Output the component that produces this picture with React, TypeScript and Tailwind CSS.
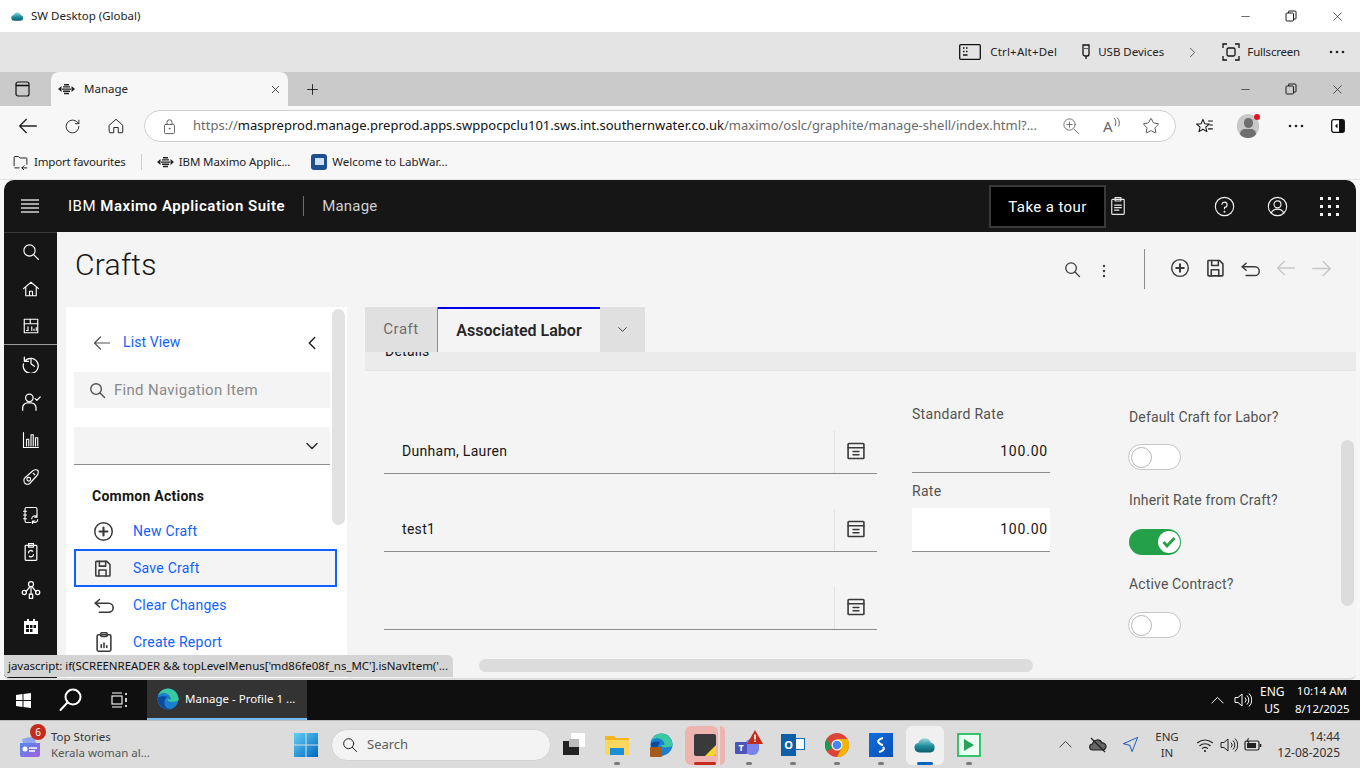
import { ReactNode } from "react";
import { ChevronDown, ChevronLeft, ChevronRight, RotateCw, Star, X, Minus, Plus } from "lucide-react";

const ui = "font-['Noto_Sans','Open_Sans',sans-serif]";
const plex = "font-['Roboto','Noto_Sans',sans-serif]";

// 24x24 stroked icon wrapper, most of the carbon-ish glyphs below use it
function Ic({ s = 20, w = 1.5, c = "currentColor", children, className = "" }: { s?: number; w?: number; c?: string; children: ReactNode; className?: string }) {
  return (
    <svg width={s} height={s} viewBox="0 0 24 24" fill="none" stroke={c} strokeWidth={w} strokeLinecap="round" strokeLinejoin="round" className={"shrink-0 " + className}>
      {children}
    </svg>
  );
}

const Hamburger = () => (
  <svg width="20" height="16" viewBox="0 0 20 16" stroke="#d4d4d4" strokeWidth="1.4" className="shrink-0">
    <path d="M1 2h18M1 6h18M1 10h18M1 14h18" />
  </svg>
);
const SearchI = ({ s = 20, w = 1.5 }: { s?: number; w?: number }) => <Ic s={s} w={w}><circle cx="10" cy="10" r="7.5" /><path d="m15.5 15.5 6.5 6.5" /></Ic>;
const AddCircle = ({ s = 24 }: { s?: number }) => <Ic s={s} w={1.7}><circle cx="12" cy="12" r="10" /><path d="M12 7.5v9M7.5 12h9" strokeWidth="2.4" /></Ic>;
const SaveI = ({ s = 24 }: { s?: number }) => <Ic s={s} w={1.9}><path d="M4.5 3h13l4 4v13.5a1 1 0 0 1-1 1h-16a1 1 0 0 1-1-1v-17a1 1 0 0 1 1-.5Z" /><path d="M8 3v6h8V3M7.5 21.5V14h9v7.5" /></Ic>;
const UndoI = ({ s = 24 }: { s?: number }) => <Ic s={s} w={1.7}><path d="M7 6 2.5 10 7 14" /><path d="M2.5 10H17a5 5 0 0 1 0 10H7" /></Ic>;
const Arrow = ({ dir, c, s = 24 }: { dir: "l" | "r"; c: string; s?: number }) => (
  <Ic s={s} c={c} w={1.6}>
    {dir === "l" ? <path d="M22 12H2M10 4l-8 8 8 8" /> : <path d="M2 12h20M14 4l8 8-8 8" />}
  </Ic>
);
const LookupI = () => (
  <Ic s={20} w={1.9} c="#393939">
    <rect x="2.5" y="3" width="19" height="18" rx="1" />
    <path d="M2.5 8h19M8.5 12.5h7M8.5 16.5h7" />
  </Ic>
);
const ReportI = () => (
  <Ic s={22} w={1.7} c="#393939">
    <rect x="4.5" y="4" width="15" height="18" rx="1.5" />
    <rect x="8.5" y="2" width="7" height="4" rx="1" />
    <path d="M9 18v-3M12 18v-5M15 18v-2" />
  </Ic>
);
const Bee = () => (
  <svg width="17" height="12" viewBox="0 0 17 12" fill="#222" className="shrink-0">
    <path d="M6 1h5v1.4H6zM5 3.2h7v1.4H5zM4 5.4h9v1.4H4zM5 7.6h7V9H5zM6 9.8h5v1.4H6z" />
    <path d="M0 6l3.5-3v6zM17 6l-3.5-3v6z" />
  </svg>
);
const DotsH = ({ c = "#222" }: { c?: string }) => (
  <svg width="16" height="4" viewBox="0 0 16 4" fill={c}><circle cx="2" cy="2" r="1.3" /><circle cx="8" cy="2" r="1.3" /><circle cx="14" cy="2" r="1.3" /></svg>
);
const RestoreI = () => (
  <svg width="12" height="12" viewBox="0 0 12 12" fill="none" stroke="#1a1a1a" strokeWidth="1" className="shrink-0">
    <rect x="1" y="3" width="7.5" height="8" rx="1" /><path d="M3.5 3V1.5a.5.5 0 0 1 .5-.5h6a1 1 0 0 1 1 1v6.500a.5.5 0 0 1-.5.5H8.500" />
  </svg>
);
const WinCtl = () => (
  <div className="flex items-center text-[#1a1a1a]">
    <div className="w-[46px] flex justify-center"><Minus size={13} strokeWidth={1.2} /></div>
    <div className="w-[46px] flex justify-center"><RestoreI /></div>
    <div className="w-[46px] flex justify-center"><X size={15} strokeWidth={1.1} /></div>
  </div>
);

const CloudApp = ({ s = 16 }: { s?: number }) => (
  <svg width={s} height={s * 0.8} viewBox="0 0 20 16" className="shrink-0">
    <defs><linearGradient id="cl" x1="0" y1="0" x2="0" y2="1"><stop offset="0" stopColor="#9adbe0" /><stop offset="0.55" stopColor="#1f8c9c" /><stop offset="1" stopColor="#0d5d6e" /></linearGradient></defs>
    <path d="M5 15a4.500 4.500 0 0 1-1-8.900A6 6 0 0 1 15.300 6 4.600 4.600 0 0 1 15 15Z" fill="url(#cl)" />
  </svg>
);

const EdgeLogo = ({ s = 24 }: { s?: number }) => (
  <svg width={s} height={s} viewBox="0 0 24 24" className="shrink-0">
    <circle cx="12" cy="12" r="11.500" fill="#1b7fd0" />
    <path d="M23.500 13c0-7-5-12.500-11.500-12.500C7 .5 2.500 4 1 8.500 3.500 5.500 7 5 10 6c3.500 1.200 5.500 4 5 6.500h-4c0 1.500 2.500 2.500 5.500 2.500 3.300 0 7-1 7-2Z" fill="#38c9a0" />
    <path d="M1 11c-.6 6 4 12 11 12.500 1.500 0 3-.3 4.300-.8-4.300 1-8-2-8.300-6C7.700 13 10 10.500 11 9.500 7 8.500 2 9 1 11Z" fill="#0c4a9a" />
  </svg>
);

const Speaker = ({ c }: { c: string }) => (
  <svg width="18" height="16" viewBox="0 0 18 16" fill="none" stroke={c} strokeWidth="1" className="shrink-0"><path d="M1 5.500h3L8 2v12l-4-3.500H1ZM11 5.500a3.500 3.500 0 0 1 0 5M13 3.500a6.500 6.500 0 0 1 0 9M15 1.500a9 9 0 0 1 0 13" /></svg>
);

// sidebar glyphs
const sideTop: ReactNode[] = [
  <SearchI key="s" s={18} />,
  <Ic key="h" s={18}><path d="M2 11.500 12 3l10 8.500M5 9v12h14V9M10 21v-6h4v6" /></Ic>,
  <Ic key="d" s={18}><rect x="3" y="3" width="18" height="18" /><path d="M3 9h18M11 3v6M8 13v5h-2M13 18v-5M16 18v-2M19 18v-4" /></Ic>,
];
const sideBottom: ReactNode[] = [
  <Ic key="a" s={20} className="-mt-[3px]"><path d="M4 5v5h5" /><path d="M4.500 10A9 9 0 1 1 3 13" /><path d="M12 7v6l4 3" /></Ic>,
  <Ic key="b" s={20}><circle cx="10" cy="7" r="4.500" /><path d="M2 22v-3a6 6 0 0 1 6-6h4a6 6 0 0 1 6 6v3M17 8l2 2 4-4" /></Ic>,
  <Ic key="c" s={18}><path d="M2 2v20h20M6 20v-9h3v9M12 20V5h3v15M18 20V9h3v11" /></Ic>,
  <Ic key="e" s={18}><path d="M3 14 14 4c2-2 6-2 7-1s1 5-1 7L10 21c-3 1.500-6 .5-7-2-.6-1.700-.6-3.500 0-5Z" /><circle cx="9" cy="15" r="2.500" /><path d="m15 7 2 2" /></Ic>,
  <Ic key="f" s={18}><path d="M12 22H6a2 2 0 0 1-2-2V4a2 2 0 0 1 2-2h12a2 2 0 0 1 2 2v7M2 7h4M2 12h4M2 17h4" /><path d="M13 17a4 4 0 0 1 7-2.500M21 18a4 4 0 0 1-7 2.500M20 11.500V15h-3M14 23.500V20h3" /></Ic>,
  <Ic key="g" s={20}><rect x="5" y="4" width="14" height="18" rx="1" /><rect x="9" y="2" width="6" height="4" /><path d="M9 13a3 3 0 0 1 5-2M15 15a3 3 0 0 1-5 2" /></Ic>,
  <Ic key="i" s={20}><circle cx="12" cy="5" r="3" /><circle cx="4" cy="15" r="2.500" /><circle cx="20" cy="15" r="2.500" /><rect x="10" y="17" width="4" height="5" /><path d="M12 8v9M6 14l4-5M18 14l-4-5" /></Ic>,
  <svg key="j" width="18" height="18" viewBox="0 0 18 18" fill="#fff"><path d="M2 3h3V1h2v2h4V1h2v2h3v13H2Z" /><path d="M4 7h3v3H4zM8 7h2.500v3H8zM11.500 7H14v3h-2.500zM4 11h3v3H4zM8 11h2.500v3H8z" fill="#161616" /></svg>,
];

function TopBars() {
  return (
    <div className={ui}>
      {/* remote desktop title */}
      <div className="h-8 bg-white flex items-center pl-[11px] justify-between">
        <div className="flex items-center gap-[7px] text-[11.500px] text-[#222]"><CloudApp s={13} /><span>SW Desktop (Global)</span></div>
        <WinCtl />
      </div>
      <div className="h-10 bg-[#e4e4e4] flex items-center justify-end text-[11.500px] text-[#222]">
        <svg width="22" height="16" viewBox="0 0 22 16" fill="none" stroke="#111" strokeWidth="1.300" className="mr-[9px]"><rect x=".7" y=".7" width="20.600" height="14.600" rx="1" /><path d="M4 4h1.500M7 4h1.500M4 7.500h1.500M7 7.500h1.500M4 11h4.500" strokeWidth="1.500" /></svg>
        <span className="tracking-[0.2px]">Ctrl+Alt+Del</span>
        <svg width="10" height="16" viewBox="0 0 10 16" fill="none" stroke="#111" strokeWidth="1.300" className="ml-6 mr-[7px]"><path d="M2 1h6v9a2 2 0 0 1-2 2H4a2 2 0 0 1-2-2ZM5 12v3M4 4v1M6 4v1" /></svg>
        <span>USB Devices</span>
        <ChevronRight size={17} strokeWidth={1} className="ml-5 mr-[21px]" />
        <svg width="18" height="18" viewBox="0 0 18 18" fill="none" stroke="#111" strokeWidth="1.300" className="mr-[7px]"><path d="M1 5V1h4M13 1h4v4M17 13v4h-4M5 17H1v-4" /><rect x="5" y="5" width="8" height="8" rx="1.500" /></svg>
        <span className="tracking-[-0.2px]">Fullscreen</span>
        <div className="ml-[29px] mr-[15px]"><DotsH /></div>
      </div>
      {/* edge tabs */}
      <div className="h-[34px] bg-[#cacaca] flex items-center pl-[14px]">
        <svg width="18" height="18" viewBox="0 0 18 18" fill="none" stroke="#111" strokeWidth="1.200" className="shrink-0"><rect x="2" y="2" width="13" height="14" rx="2" /><path d="M2 5.500h13" strokeWidth="1.600" /></svg>
        <div className="ml-[19px] w-[237px] h-[34px] bg-[#f7f7f7] rounded-t-lg flex items-center pl-[7px] pr-[6px] text-[11.500px] text-[#222]">
          <Bee /><span className="ml-[9px]">Manage</span>
          <X size={13} strokeWidth={1.500} className="ml-auto" />
        </div>
        <Plus size={17} strokeWidth={1.200} className="ml-[16px] text-[#111]" />
        <div className="ml-auto"><WinCtl /></div>
      </div>
      {/* address bar */}
      <div className="h-10 bg-[#f7f7f7] flex items-center text-[#222]">
        <div className="w-14 flex justify-center"><Arrow dir="l" c="#222" s={20} /></div>
        <div className="w-[32px] flex justify-center"><RotateCw size={17} strokeWidth={1.300} /></div>
        <div className="w-[56px] flex justify-center"><Ic s={18} w={1.300}><path d="M3 11 12 3l9 8v9a1 1 0 0 1-1 1h-5v-7H9v7H4a1 1 0 0 1-1-1Z" /></Ic></div>
        <div className="w-[1032px] h-8 bg-white rounded-full border border-[#cfcfcf] flex items-center pl-4 pr-3">
          <Ic s={17} w={1.300} c="#555"><rect x="5" y="9" width="14" height="13" rx="1.500" /><path d="M8.500 9V6a3.500 3.500 0 0 1 7 0v3" /><circle cx="12" cy="15" r=".6" /></Ic>
          <span className="ml-[15px] w-[850px] shrink-0 text-[13px] whitespace-nowrap text-[#6a6a6a]">
            https://<span className="text-[#111]">maspreprod.manage.preprod.apps.swppocpclu101.sws.int.southernwater.co.uk</span>/maximo/oslc/graphite/manage-shell/index.html?...
          </span>
          <Ic s={18} w={1.200} c="#666" className="ml-[19px]"><circle cx="10" cy="10" r="7.500" /><path d="m16 16 6 6M10 6.500v7M6.500 10h7" /></Ic>
          <span className="ml-[23px] text-[15px] text-[#666] leading-none">A</span>
          <svg width="7" height="11" viewBox="0 0 7 11" fill="none" stroke="#666" strokeWidth="1" className="-mt-[7px] shrink-0"><path d="M1 1c2 2 2.500 5 1 8M4 .5c2.500 3 3 6 1.500 9" /></svg>
          <Star size={18} strokeWidth={1.200} className="ml-[22px] text-[#444] shrink-0" />
        </div>
        <Ic s={19} w={1.300} c="#111" className="ml-[19px]"><path d="m10 3 2.300 5.500 5.700.5-4.400 3.800 1.400 5.700L10 15.500 5 18.500l1.400-5.700L2 9l5.700-.5ZM17 5h5M19 10h3M17 15h5" /></Ic>
        <div className="ml-[23px] relative w-[22px] h-[24px] rounded-full bg-[#c8c8c8] overflow-hidden shrink-0">
          <div className="mx-auto mt-[4px] w-[9px] h-[10px] rounded-full bg-[#6e6e6e]" />
          <div className="mx-auto mt-[1px] w-[16px] h-[10px] rounded-full bg-[#6e6e6e]" />
        </div>
        <div className="w-[6px] h-[6px] rounded-full bg-[#e81123] -ml-[5px] -mt-[18px] z-10 shrink-0" />
        <div className="ml-[28px]"><DotsH /></div>
        <svg width="14" height="14" viewBox="0 0 14 14" className="ml-[27px] shrink-0"><rect x=".7" y=".7" width="12.600" height="12.600" rx="2" fill="#fff" stroke="#111" strokeWidth="1.300" /><rect x="8" y="1" width="5" height="12" fill="#111" /><path d="M6.500 4.500 4 7l2.500 2.500V4.500Z" fill="#111" /></svg>
      </div>
      {/* favourites */}
      <div className="h-[34px] bg-[#f7f7f7] border-b border-[#e4e4e4] flex items-center pl-[12px] pb-[2px] text-[11.500px] text-[#222]">
        <Ic s={17} w={1.300} c="#111"><path d="M3 18V6a1 1 0 0 1 1-1h5l2 2h9a1 1 0 0 1 1 1v8M4 21h6M14 21h7M17 18l-3 3 3 3" /></Ic>
        <span className="ml-[5px] tracking-[-0.18px]">Import favourites</span>
        <div className="w-px h-4 bg-[#cfcfcf] mx-[15px]" />
        <Bee /><span className="ml-[5px] tracking-[-0.1px]">IBM Maximo Applic...</span>
        <div className="ml-[21px] w-[16px] h-[16px] rounded-[3px] bg-[#1d4f8c] flex items-center justify-center"><div className="w-[9px] h-[7px] bg-[#cfe0f5]" /></div>
        <span className="ml-[5px]">Welcome to LabWar...</span>
      </div>
    </div>
  );
}

function Field({ value }: { value?: string }) {
  return (
    <div className="h-[43px] flex border-b border-[#8d8d8d]">
      <div className="flex-1 pl-[18px] pb-[1px] flex items-center text-[14px] tracking-[0.3px] text-[#161616]">{value}</div>
      <div className="w-[43px] border-l border-[#e0e0e0] flex items-center justify-center pb-[2px]"><LookupI /></div>
    </div>
  );
}

function Toggle({ on }: { on?: boolean }) {
  if (on)
    return (
      <div className="w-[52px] h-[26px] rounded-full bg-[#24a148] flex items-center justify-end pr-[1px]">
        <div className="w-[22px] h-[22px] rounded-full bg-white flex items-center justify-center">
          <svg width="14" height="12" viewBox="0 0 14 12" fill="none" stroke="#24a148" strokeWidth="2.800"><path d="m1.500 6 3.500 4 7.500-8" /></svg>
        </div>
      </div>
    );
  return (
    <div className="w-[53px] h-[26px] rounded-full bg-white border border-[#c6c6c6] flex items-center pl-[2px]">
      <div className="w-[21px] h-[21px] rounded-full bg-white border border-[#b5b5b5]" />
    </div>
  );
}

function NavRow({ icon, label, active }: { icon: ReactNode; label: string; active?: boolean }) {
  return (
    <div className={"h-[38px] -mb-[1px] flex items-center " + (active ? "w-[263px] border-2 border-[#0f62fe] bg-[#f4f4f4]" : "w-[256px] border-2 border-transparent")}>
      <div className="w-[57px] pl-[17px] flex items-center text-[#393939]">{icon}</div>
      <span className="text-[14px] tracking-[0.25px] text-[#0f62fe]">{label}</span>
    </div>
  );
}

function LeftPanel() {
  return (
    <div className="relative ml-[9px] w-[281px] bg-white overflow-hidden">
      <div className="absolute right-[2px] top-[2px] w-[13px] h-[216px] rounded-full bg-[#e2e2e2]" />
      <div className="pl-[8px]">
        <div className="h-[65px] flex items-center pl-[19px] w-[248px] pt-[6px]">
          <Arrow dir="l" c="#525252" s={18} />
          <span className="ml-[12px] text-[14px] tracking-[0.1px] text-[#0f62fe]">List View</span>
          <ChevronLeft size={22} strokeWidth={1.600} className="ml-auto -mr-[1px] text-[#222]" />
        </div>
        <div className="w-[256px] h-[36px] bg-[#f4f4f4] flex items-center pl-[15px] text-[#8a8a8a] text-[15px] tracking-[0.3px]">
          <div className="text-[#525252]"><SearchI s={17} w={2} /></div>
          <span className="ml-[8px]">Find Navigation Item</span>
        </div>
        <div className="mt-[19px] w-[256px] h-[38px] bg-[#f4f4f4] border-b border-[#8d8d8d] flex items-center justify-end pr-[8px]">
          <ChevronDown size={20} strokeWidth={1.600} className="text-[#222]" />
        </div>
        <div className="mt-[21px] pl-[18px] text-[14px] font-bold tracking-[0.25px] text-[#161616]">Common Actions</div>
        <div className="mt-[5px]">
          <NavRow icon={<AddCircle s={21} />} label="New Craft" />
          <NavRow active icon={<SaveI s={19} />} label="Save Craft" />
          <NavRow icon={<UndoI s={22} />} label="Clear Changes" />
          <NavRow icon={<ReportI />} label="Create Report" />
        </div>
      </div>
    </div>
  );
}

function RightPanel() {
  const labelCls = "text-[14px] tracking-[0.3px] text-[#525252] leading-5";
  const toggleLabelCls = "text-[14px] tracking-[0.15px] text-[#525252] leading-5 ml-[1px]";
  return (
    <div className="relative ml-[18px] flex-1 min-w-0 overflow-hidden">
      <div className="flex h-[45px] text-[16px] bg-[#f4f4f4]">
        <div className="w-[73px] bg-[#e0e0e0] border-r border-[#8d8d8d] flex items-center justify-center text-[#6f6f6f] tracking-[0.5px] text-[15px]">Craft</div>
        <div className="w-[162px] border-t-2 border-[#0000e6] flex items-center justify-center font-semibold text-[#262626]">Associated Labor</div>
        <div className="w-[45px] bg-[#e0e0e0] flex items-center justify-center"><ChevronDown size={15} strokeWidth={1.300} className="text-[#222]" /></div>
      </div>
      <div className="h-[19px] bg-[#ebebeb] border-b border-[#e2e6ea] overflow-hidden pl-[20px]">
        <div className="-mt-[11px] text-[14px] leading-5 tracking-[0.25px] text-[#161616]">Details</div>
      </div>
      <div className="flex pl-[19px]">
        <div className="w-[493px] pt-[60px] flex flex-col gap-[35px]">
          <Field value="Dunham, Lauren" />
          <Field value="test1" />
          <Field />
        </div>
        <div className="ml-[35px] w-[138px] pt-[33px]">
          <div className={labelCls}>Standard Rate</div>
          <div className="h-[43px] mt-[7px] -translate-y-[1px] border-b border-[#8d8d8d] flex items-center justify-end pr-[2px] text-[14px] tracking-[0.8px] text-[#161616]">100.00</div>
          <div className={labelCls + " mt-[7px]"}>Rate</div>
          <div className="h-[44px] mt-[7px] bg-white border-b border-[#8d8d8d] flex items-center justify-end pr-[2px] text-[14px] tracking-[0.8px] text-[#161616]">100.00</div>
        </div>
        <div className="ml-[78px] pt-[36px]">
          <div className={toggleLabelCls}>Default Craft for Labor?</div>
          <div className="mt-[17px]"><Toggle /></div>
          <div className={toggleLabelCls + " mt-[20px]"}>Inherit Rate from Craft?</div>
          <div className="mt-[19px] ml-[1px]"><Toggle on /></div>
          <div className={toggleLabelCls + " mt-[19px]"}>Active Contract?</div>
          <div className="mt-[18px]"><Toggle /></div>
        </div>
      </div>
      <div className="absolute right-[2px] top-[133px] w-[13px] h-[166px] rounded-full bg-[#dcdcdc]" />
      <div className="absolute left-[114px] top-[352px] w-[554px] h-[13px] rounded-full bg-[#dcdcdc]" />
    </div>
  );
}

function AppWindow() {
  return (
    <div className={"relative mx-1 h-[500px] rounded-t-[10px] rounded-b-md overflow-hidden flex flex-col bg-[#f4f4f4] border-b-2 border-[#dcdcdc] " + plex}>
      <header className="h-[52px] bg-[#161616] flex items-center text-white shrink-0">
        <div className="ml-4"><Hamburger /></div>
        <span className="ml-[28px] text-[15px] tracking-[0.52px]">IBM <b className="font-semibold">Maximo Application Suite</b></span>
        <div className="ml-[18px] w-px h-[20px] bg-[#6f6f6f]" />
        <span className="ml-[18px] text-[15px] tracking-[0.2px] text-[#d0d0d0]">Manage</span>
        <div className="ml-auto w-[117px] h-[43px] bg-black border-2 border-[#393939] flex items-center justify-center text-[15px] tracking-[0.4px] pt-[2px]">Take a tour</div>
        <div className="w-[24px] flex justify-center"><Ic s={20} w={1.400} c="#e8e8e8"><rect x="4.500" y="4" width="15" height="18" rx="1" /><rect x="8.500" y="2" width="7" height="4" /><path d="M8 11h8M8 14h8M8 17h5" /></Ic></div>
        <div className="ml-[84px]"><Ic s={21} w={1.300} c="#f0f0f0"><circle cx="12" cy="12" r="10.500" /><path d="M9 9.500A3 3 0 1 1 12 13v1.500" /><circle cx="12" cy="18" r=".5" /></Ic></div>
        <div className="ml-[32px]"><Ic s={21} w={1.300} c="#f0f0f0"><circle cx="12" cy="12" r="10.500" /><circle cx="12" cy="9.500" r="4" /><path d="M5 19c1.500-3 3.500-4 7-4s5.500 1 7 4" /></Ic></div>
        <div className="ml-[32px] mr-[17px] grid grid-cols-3 gap-[5px]">
          {Array.from({ length: 9 }).map((_, i) => <div key={i} className="w-[3px] h-[3px] bg-[#f0f0f0]" />)}
        </div>
      </header>
      <div className="flex flex-1 min-h-0">
        <aside className="w-[53px] bg-[#161616] text-white shrink-0 border-t border-[#3a3a3a]">
          <div className="h-[112px] border-b border-[#9a9a9a]">
            {sideTop.map((ic, i) => <div key={i} className="h-[37px] flex items-center justify-center">{ic}</div>)}
          </div>
          <div className="pt-[1px]">
            {sideBottom.map((ic, i) => <div key={i} className="h-[37.500px] flex items-center justify-center">{ic}</div>)}
          </div>
        </aside>
        <main className="flex-1 min-w-0 flex flex-col">
          <div className="h-[75px] shrink-0 flex items-start">
            <h1 className="ml-[18px] mt-[13px] text-[30px] font-light leading-10 tracking-[0.3px] text-[#161616]">Crafts</h1>
            <div className="ml-auto flex items-center mr-[24px] mt-[16px] h-[42px] text-[#393939]">
              <SearchI s={17} w={1.8} />
              <svg width="4" height="14" viewBox="0 0 4 14" fill="#393939" className="ml-[21px] mt-[4px]"><circle cx="2" cy="2" r="1.200" /><circle cx="2" cy="7" r="1.200" /><circle cx="2" cy="12" r="1.200" /></svg>
              <div className="ml-[38px] w-px h-[40px] bg-[#8d8d8d]" />
              <div className="ml-[25px] -mt-[2px] flex items-center gap-[15px]">
                <AddCircle s={20} /><SaveI s={20} />
                <UndoI s={21} /><Arrow dir="l" c="#c6c6c6" s={20} /><Arrow dir="r" c="#c6c6c6" s={21} />
              </div>
            </div>
          </div>
          <div className="flex flex-1 min-h-0">
            <LeftPanel />
            <RightPanel />
          </div>
        </main>
      </div>
      <div className={"absolute left-0 bottom-[1px] w-[449px] h-[22px] bg-[#d4d4d4] rounded-tr-md flex items-center pl-[4px] text-[11.500px] tracking-[-0.04px] text-[#111] whitespace-nowrap overflow-hidden " + ui}>
        javascript: if(SCREENREADER &amp;&amp; topLevelMenus['md86fe08f_ns_MC'].isNavItem('...
      </div>
    </div>
  );
}

function RemoteTaskbar() {
  return (
    <div className={"h-10 bg-[#0f0f0f] flex items-center text-white " + ui}>
      <svg width="15" height="15" viewBox="0 0 15 15" fill="#fff" className="ml-[16px]"><path d="M0 2 6.500 1v6H0zM7.500 .9 15 0v7H7.500zM0 8h6.500v6L0 13zM7.500 8H15v7l-7.500-1z" /></svg>
      <svg width="26" height="26" viewBox="0 0 26 26" fill="none" stroke="#fff" strokeWidth="2" className="ml-[27px]"><circle cx="15" cy="10" r="7.500" /><path d="M9.500 15.500 2.500 23" strokeLinecap="round" /></svg>
      <svg width="17" height="16" viewBox="0 0 17 16" fill="none" stroke="#fff" strokeWidth="1.100" className="ml-[27px]"><path d="M1 1h10M1 15h10" /><rect x="1" y="4" width="10" height="8" /><path d="M15 1v2M15 6v4M15 13v2" strokeWidth="1.600" /></svg>
      <div className="ml-[19px] w-[160px] h-10 bg-[#333] border-b-2 border-[#76b9ed] flex items-center pl-[10px] text-[11.500px]">
        <EdgeLogo s={22} />
        <span className="ml-[6px] whitespace-nowrap">Manage - Profile 1 ...</span>
      </div>
      <div className="ml-auto flex items-center text-[12px]">
        <Ic s={15} w={1.500} c="#fff"><path d="m3 16 9-9 9 9" /></Ic>
        <div className="ml-[9px]"><Speaker c="#fff" /></div>
        <div className="ml-[8px] text-center leading-[17px] w-[24px]">ENG<br />US</div>
        <div className="ml-[11px] mr-[13px] w-[52px] text-[11.500px] text-right leading-[18px] whitespace-nowrap">10:14 AM<br />8/12/2025</div>
      </div>
    </div>
  );
}

function TrayIcon({ children, cur }: { children: ReactNode; cur?: "red" | "blue" | "dot" | "none" }) {
  return (
    <div className="relative w-[44px] h-[44px] flex items-center justify-center">
      {cur === "red" && (
        <>
          <div className="absolute left-[2px] top-[3px] w-[33px] h-[39px] rounded-md bg-[#eeb4b0]" />
          <div className="absolute left-[37px] top-[3px] w-[5px] h-[39px] rounded-r-md bg-[#eeb4b0]" />
          <div className="absolute bottom-[2px] left-[11px] w-[22px] h-[3px] rounded-full bg-[#c42b1c]" />
        </>
      )}
      {cur === "blue" && (
        <>
          <div className="absolute left-[3px] top-[3px] w-[38px] h-[39px] rounded-md bg-[#f0f0f0]" />
          <div className="absolute bottom-[2px] left-[14px] w-[16px] h-[3px] rounded-full bg-[#0067c0]" />
        </>
      )}
      <div className="relative">{children}</div>
      {cur === "dot" && <div className="absolute bottom-[2px] left-[19px] w-[6px] h-[3px] rounded-full bg-[#7a7a7a]" />}
    </div>
  );
}

function LocalTaskbar() {
  return (
    <div className={"h-12 bg-[#dcdcdc] border-t border-[#bdbdbd] flex items-center " + ui}>
      {/* widgets */}
      <div className="relative ml-[19px] w-[22px] h-[24px] mt-[4px] shrink-0">
        <svg width="22" height="24" viewBox="0 0 22 24">
          <defs><linearGradient id="wd" x1="0" y1="0" x2="1" y2="1"><stop offset="0" stopColor="#4f8bf0" /><stop offset="1" stopColor="#a45ee0" /></linearGradient></defs>
          <path d="M3 4 15 1l3 12-12 3Z" fill="#8fa8ee" />
          <path d="M1 8h20v12a2 2 0 0 1-2 2H3a2 2 0 0 1-2-2Z" fill="url(#wd)" />
          <path d="M10 13h8M10 16h6" stroke="#fff" strokeWidth="1.400" />
          <circle cx="6" cy="14" r="2.500" fill="#fff" />
        </svg>
        <div className="absolute -top-[11px] left-[11px] w-[16px] h-[16px] rounded-full bg-[#c42b1c] text-white text-[10px] leading-[16px] text-center">6</div>
      </div>
      <div className="ml-[10px] w-[99px] text-[11.500px] leading-[16px] whitespace-nowrap">
        <div className="text-[#333]">Top Stories</div>
        <div className="text-[#555]">Kerala woman al...</div>
      </div>
      <svg width="24" height="24" viewBox="0 0 24 24" className="ml-[144px] shrink-0">
        <defs><linearGradient id="w" x1="0" y1="0" x2="1" y2="1"><stop offset="0" stopColor="#62d0f5" /><stop offset="1" stopColor="#0067c0" /></linearGradient></defs>
        <path d="M0 0h11.500v11.500H0zM12.500 0H24v11.500H12.500zM0 12.500h11.500V24H0zM12.500 12.500H24V24H12.500z" fill="url(#w)" />
      </svg>
      <div className="ml-[13px] w-[220px] h-[32px] rounded-full bg-[#f3f3f3] border border-[#d4d4d4] flex items-center pl-[10px] text-[13px] text-[#5c5c5c] shrink-0">
        <div className="text-[#222]"><SearchI s={16} /></div>
        <span className="ml-[9px]">Search</span>
      </div>
      <div className="flex items-center">
        <TrayIcon>
          <div className="relative w-[24px] h-[24px]">
            <div className="absolute right-0 top-0 w-[14px] h-[14px] bg-white" />
            <div className="absolute left-[2px] bottom-[2px] w-[16px] h-[14px] bg-[#222]" />
            <div className="absolute left-[8px] top-[6px] w-[10px] h-[8px] bg-[#bdbdbd]" />
          </div>
        </TrayIcon>
        <TrayIcon cur="dot">
          <svg width="24" height="22" viewBox="0 0 24 22"><path d="M0 2h9l2 2h13v17H0Z" fill="#f3b61f" /><path d="M0 6h24v15H0Z" fill="#ffd75e" /><path d="M5 14h14v7H5Z" fill="#1b8fd6" /></svg>
        </TrayIcon>
        <TrayIcon cur="none">
          <div className="relative"><EdgeLogo s={23} /><div className="absolute -bottom-[1px] left-0 w-[12px] h-[10px] bg-[#a65b17] rounded-[1px]" /></div>
        </TrayIcon>
        <TrayIcon cur="red">
          <div className="relative w-[22px] h-[22px] bg-[#3a3a3a] rounded-[2px] overflow-hidden">
            <div className="absolute right-0 bottom-0 w-0 h-0 border-l-[11px] border-l-transparent border-b-[11px] border-b-[#f6d327]" />
          </div>
        </TrayIcon>
        <TrayIcon cur="dot">
          <div className="relative w-[28px] h-[24px]">
            <div className="absolute right-[4px] top-[6px] w-[14px] h-[16px] rounded-md bg-[#7b83eb]" />
            <div className="absolute left-0 top-[9px] w-[12px] h-[12px] bg-[#4b53bc] rounded-[1px] text-white text-[9px] leading-[12px] text-center font-bold">T</div>
            <svg width="16" height="14" viewBox="0 0 16 14" className="absolute right-0 -top-[3px]"><path d="M8 0 16 14H0Z" fill="#c42b1c" /><path d="M7.200 4.500h1.600v5H7.200zM7.200 10.500h1.600V12H7.200z" fill="#fff" /></svg>
          </div>
        </TrayIcon>
        <TrayIcon cur="dot">
          <div className="relative w-[24px] h-[22px]">
            <div className="absolute right-0 top-[4px] w-[14px] h-[12px] bg-white border border-[#0f6cbd]" />
            <div className="absolute left-0 top-0 w-[15px] h-[22px] bg-[#0f5fa8] text-white text-[11px] leading-[22px] text-center font-bold">O</div>
          </div>
        </TrayIcon>
        <TrayIcon cur="dot">
          <svg width="24" height="24" viewBox="0 0 24 24">
            <circle cx="12" cy="12" r="12" fill="#db4437" />
            <path d="M12 12 1.600 18A12 12 0 0 1 1.600 6L7 15Z" fill="#0f9d58" />
            <path d="M12 24A12 12 0 0 0 22.400 6H12l4.500 9Z" fill="#f4b400" />
            <circle cx="12" cy="12" r="5.500" fill="#fff" /><circle cx="12" cy="12" r="4.300" fill="#4285f4" />
          </svg>
        </TrayIcon>
        <TrayIcon cur="dot">
          <div className="w-[24px] h-[24px] bg-gradient-to-br from-[#0f6fe0] to-[#0a4fb5] flex items-center justify-center">
            <svg width="12" height="18" viewBox="0 0 12 18" fill="none" stroke="#fff" strokeWidth="2"><path d="M8 2C4 3 2 5 4 7s4 2 4 2M4 16c4-1 6-3 4-5" /></svg>
          </div>
        </TrayIcon>
        <TrayIcon cur="blue"><CloudApp s={22} /></TrayIcon>
        <TrayIcon cur="dot">
          <div className="w-[24px] h-[24px] border-2 border-[#35c46c] flex items-center justify-center bg-[#eafff1]">
            <div className="w-0 h-0 border-y-[6px] border-y-transparent border-l-[10px] border-l-[#27a35b]" />
          </div>
        </TrayIcon>
      </div>
      <div className="ml-[67px] flex items-center text-[#222]">
        <Ic s={15} w={1.500} c="#333"><path d="m3 16 9-9 9 9" /></Ic>
        <svg width="18" height="16" viewBox="0 0 18 16" className="ml-[16px]" fill="none" stroke="#222" strokeWidth="1.200"><path d="M4 13a3 3 0 0 1-.5-6A5 5 0 0 1 13 6a3.500 3.500 0 0 1 1 7Z" fill="#666" /><path d="m2 1 14 14" /></svg>
        <Ic s={19} w={1.300} c="#2a63b5" className="ml-[14px]"><path d="M21 3 3 11l8 2 3 8Z" /></Ic>
        <div className="ml-[15px] w-[24px] text-center text-[11.500px] leading-[16px] text-[#333]">ENG<br />IN</div>
        <Ic s={18} w={1.400} c="#222" className="ml-[17px]"><path d="M2 9c6-5 14-5 20 0M5 13c4-3.500 10-3.500 14 0M8.500 16.500c2-1.500 5-1.500 7 0" /><circle cx="12" cy="20" r=".7" /></Ic>
        <div className="ml-[6px]"><Speaker c="#222" /></div>
        <svg width="18" height="14" viewBox="0 0 18 14" fill="none" stroke="#222" strokeWidth="1.200" className="ml-[6px] shrink-0"><rect x="1" y="3" width="14" height="9" rx="1.500" /><rect x="3" y="5" width="9" height="5" fill="#222" stroke="none" /><path d="M16.500 6v3" strokeWidth="1.600" /><path d="M4.500 0 3 3.500h2L4 6.500" strokeWidth="1" /></svg>
        <div className="ml-[6px] w-[72px] text-right text-[12px] leading-[16px] text-[#333] whitespace-nowrap">14:44<br />12-08-2025</div>
      </div>
    </div>
  );
}

export default function App() {
  return (
    <div className="w-[1360px] h-[768px] overflow-hidden flex flex-col bg-[#f7f7f7]">
      <TopBars />
      <AppWindow />
      <RemoteTaskbar />
      <LocalTaskbar />
    </div>
  );
}
